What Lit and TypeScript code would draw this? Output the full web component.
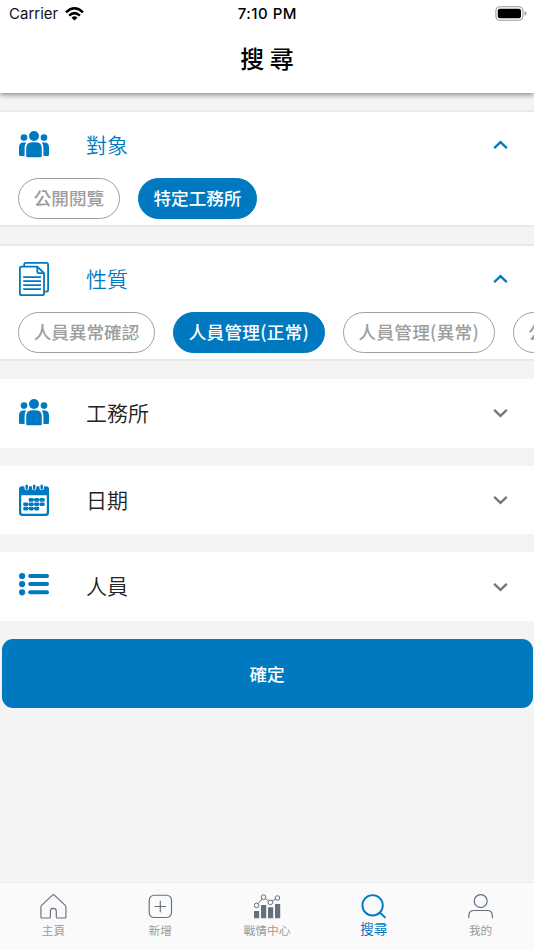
import { LitElement, html, css, svg, nothing } from "lit";
import { customElement, property } from "lit/decorators.js";
import { classMap } from "lit/directives/class-map.js";

const people = svg`<svg width="30" height="34" viewBox="0 0 30 34" fill="currentColor">
  <circle cx="15" cy="8" r="5"/><circle cx="5" cy="9.6" r="3.3"/><circle cx="25" cy="9.6" r="3.3"/>
  <path d="M7.2 28V20.5Q7.2 14.3 13 14.3H17Q22.8 14.3 22.8 20.5V28Q22.8 29.3 21.5 29.3H8.5Q7.2 29.3 7.2 28Z"/>
  <path d="M0 26.8V19.5Q0 14.6 4.5 14.6H7.2Q5.6 16.8 5.6 20V28H1.2Q0 28 0 26.8Z"/>
  <path d="M30 26.8V19.5Q30 14.6 25.5 14.6H22.8Q24.4 16.8 24.4 20V28H28.8Q30 28 30 26.8Z"/></svg>`;

const documents = svg`<svg width="30" height="34" viewBox="0 0 30 34" fill="none" stroke="currentColor" stroke-width="1.8" stroke-linejoin="round">
  <path d="M5.2 4V2.4Q5.2.9 6.7.9H27.5Q29.1.9 29.1 2.5V28Q29.1 29.6 27.5 29.6H25.4"/>
  <path d="M18.3 4.6H2.6Q.9 4.6.9 6.2V31.4Q.9 33.1 2.6 33.1H23.4Q25 33.1 25 31.4V11.2Z"/>
  <path d="M18.3 4.8V9.6Q18.3 11.2 19.9 11.2H25"/>
  <path d="M4.2 15.2H22M4.2 19.1H22M4.2 23.2H22M4.2 27.2H22"/></svg>`;

const calendar = svg`<svg width="30" height="34" viewBox="0 0 30 34" fill="currentColor">
  <path fill-rule="evenodd" d="M3 3.2H27Q30 3.2 30 6.2V29.8Q30 32.9 27 32.9H3Q0 32.9 0 29.8V6.2Q0 3.2 3 3.2ZM2.2 12.2V29.2Q2.2 30.8 3.8 30.8H26.2Q27.8 30.8 27.8 29.2V12.2Z"/>
  <g fill="none" stroke="#fff" stroke-width="4.6" stroke-linecap="round"><path d="M7.7 2.6V5M15.2 2.6V5M22.7 2.6V5"/></g>
  <g fill="none" stroke="currentColor" stroke-width="2.4" stroke-linecap="round"><path d="M7.7 2.8V5.6M15.2 2.8V5.6M22.7 2.8V5.6"/></g>
  ${[[16.8, [1, 2, 3]], [21.2, [0, 1, 2, 3]], [25.5, [0, 1, 2]]].map(([y, cols]) =>
    (cols as number[]).map((c) => svg`<rect x=${4.2 + c * 5.5} y=${(y as number) - 1.8} width="5" height="3.7" rx="1.3"/>`))}
  <path d="M12 16.3H23V17.1H12ZM6 20.7H23V21.5H6ZM6 25.1H18V25.9H6Z"/></svg>`;

const list = svg`<svg width="30" height="34" viewBox="0 0 30 34" fill="currentColor">
  ${[6, 14.1, 22.3].map((y) => svg`<circle cx="3.1" cy=${y} r="3.1"/><rect x="9.2" y=${y - 2} width="20.8" height="4" rx="2"/>`)}</svg>`;

const home = svg`<svg width="28" height="28" viewBox="-.6 0 28 28" fill="none" stroke="currentColor" stroke-width="1.15" stroke-linejoin="round">
  <path d="M2 13.3Q1.3 14 1.3 15V25Q1.3 26 2.3 26H9.8Q10.8 26 10.8 25V19.2Q10.8 16.3 13.7 16.3Q16.7 16.3 16.7 19.2V25Q16.7 26 17.7 26H25.3Q26.3 26 26.3 25V15Q26.3 14 25.6 13.3L14.8 3.1Q13.8 2.3 12.8 3.1Z"/></svg>`;
const plus = svg`<svg width="28" height="28" viewBox="-.3 0 28 28" fill="none" stroke="currentColor" stroke-width="1.15" stroke-linecap="round">
  <rect x="2.9" y="3.2" width="22.3" height="22.3" rx="5"/><path d="M14 9.2V19.8M8.7 14.5H19.3"/></svg>`;
const chart = svg`<svg width="28" height="28" viewBox="0 0 28 28" fill="currentColor">
  <rect x="1" y="19" width="5.2" height="7.2" rx=".5"/><rect x="8" y="13" width="5.2" height="13.2" rx=".5"/><rect x="15" y="15.2" width="5.2" height="11" rx=".5"/><rect x="22" y="12" width="5.2" height="14.2" rx=".5"/>
  <g fill="none" stroke="currentColor" stroke-width="1"><path d="M5.2 11.6L8.9 7M12.5 6.7L15.6 9.1M19.1 9.2L22.5 7.1"/><circle cx="3.6" cy="13.4" r="2.3"/><circle cx="10.6" cy="5.1" r="2.3"/><circle cx="17.4" cy="10.4" r="2.3"/><circle cx="24.4" cy="6" r="2.3"/></g></svg>`;
const search = svg`<svg width="28" height="28" viewBox="0 0 28 28" fill="none" stroke="currentColor" stroke-width="1.9" stroke-linecap="round">
  <circle cx="12.6" cy="13.3" r="10.2"/><path d="M20 20.7L25 25.4"/></svg>`;
const person = svg`<svg width="28" height="28" viewBox="0 0 28 28" fill="none" stroke="currentColor" stroke-width="1.2" stroke-linecap="round">
  <circle cx="13.7" cy="9.1" r="6.5"/><path d="M1.8 25.6V23.8Q1.8 18.5 7 18.5H20.2Q25.4 18.5 25.4 23.8V25.6"/></svg>`;

interface Chip { label: string; on?: boolean; loose?: boolean }

@customElement("filter-panel")
class FilterPanel extends LitElement {
  @property() label = "";
  @property({ attribute: false }) icon: unknown;
  @property({ attribute: false }) chips: Chip[] = [];

  static styles = css`
    :host { display: block; flex: none; background: #fff; }
    .open { box-sizing: border-box; border-top: 2px solid #e9e9e9; border-bottom: 2px solid #e9e9e9; height: 117px; overflow: hidden; }
    .head { display: flex; align-items: center; height: 68.7px; padding: 0 26px 0 19px; color: #0079c1; }
    .open .head { margin-top: -1.5px; }
    .icon { display: flex; width: 67px; }
    .title { flex: 1; padding-bottom: 2.6px; font-size: 21px; line-height: 30px; font-weight: 350; color: #222; }
    .open .title { color: #0079c1; padding-bottom: 1.6px; }
    .chev { color: #757575; }
    .open .chev { color: #0079c1; transform: rotate(180deg); }
    .chips { display: flex; gap: 18px; padding-left: 18px; margin-top: -.9px; overflow: hidden; }
    .chip { box-sizing: border-box; flex: none; height: 40.6px; line-height: 38px; border: 1.4px solid #9e9e9e; border-radius: 21px; padding: 0 14.7px; color: #9e9e9e; font-size: 17.6px; white-space: nowrap; font-weight: 500; }
    .on { background: #0079c1; border-color: #0079c1; color: #fff; }
    .loose { letter-spacing: .3px; }
  `;

  render() {
    return html`<div class=${classMap({ open: this.chips.length > 0 })}>
      <div class="head">
        <span class="icon">${this.icon}</span>
        <span class="title">${this.label}</span>
        <svg class="chev" width="15" height="10" viewBox="0 0 15 10" fill="none" stroke="currentColor" stroke-width="2.3"><path d="M1.2 1.8L7.5 7.8L13.8 1.8"/></svg>
      </div>
      ${this.chips.length
        ? html`<div class="chips">${this.chips.map((c) => html`<span class=${classMap({ chip: true, on: !!c.on, loose: !!c.loose })}>${c.label}</span>`)}</div>`
        : nothing}
    </div>`;
  }
}

@customElement("app-root")
class AppRoot extends LitElement {
  static styles = css`
    :host { display: flex; flex-direction: column; height: 950px; overflow: hidden; background: #f4f4f4; font-family: "Noto Sans CJK TC", sans-serif; }
    .top { flex: none; height: 92.5px; background: #fff; box-shadow: 0 2px 5px rgba(0,0,0,.42); }
    .status { display: grid; grid-template-columns: 1fr auto 1fr; align-items: center; height: 28px; padding: 0 7px 0 9px; font: 400 15px/28px Inter, sans-serif; color: #111; }
    .left { display: flex; align-items: center; gap: 7px; }
    .time { font-weight: 500; letter-spacing: .5px; margin-right: 1.4px; color: #000; }
    .battery { justify-self: end; }
    .heading { margin: 0; text-align: center; font-size: 24px; line-height: 60px; font-weight: 500; color: #000; }
    .body { flex: 1; min-height: 0; display: flex; flex-direction: column; gap: 18px; padding-top: 18.5px; }
    .expanded { margin-top: -1px; }
    .ok { flex: none; height: 69px; margin: 0 1.5px; padding: 0; border: 0; border-radius: 11px; background: #0079c1; color: #fff; font: 500 17.6px "Noto Sans CJK TC", sans-serif; }
    .tabs { flex: none; height: 67px; border-top: 1px solid #eeeeee; background: #fafafa; display: grid; grid-template-columns: repeat(5, 1fr); }
    .tab { display: flex; flex-direction: column; align-items: center; padding-top: 8.6px; color: #65707e; }
    .name { font-size: 11.7px; line-height: 20px; color: #9b9b9b; }
    .active, .active .name { color: #0079c1; }
    .active .name { font-size: 13.6px; line-height: 17px; }
  `;

  render() {
    const tabs = [
      { name: "主頁", icon: home }, { name: "新增", icon: plus }, { name: "戰情中心", icon: chart },
      { name: "搜尋", icon: search, active: true }, { name: "我的", icon: person },
    ];
    return html`
      <header class="top">
        <div class="status">
          <div class="left"><span>Carrier</span>
            <svg width="19" height="17" viewBox="0 0 19 17" fill="none" stroke="#000" stroke-width="2.5"><path d="M1 6.3Q9.5-1.7 18 6.3M4.1 9.6Q9.5 4.6 14.9 9.6"/><path d="M9.5 14.6L6.5 11.7Q9.5 9 12.5 11.7Z" fill="#000" stroke="none"/></svg>
          </div>
          <span class="time">7:10 PM</span>
          <svg class="battery" width="32" height="16" viewBox="0 0 32 16"><rect x=".9" y=".8" width="27" height="13.4" rx="4" fill="none" stroke="#999" stroke-width="1.1"/><rect x="2.8" y="2.7" width="23.2" height="9.6" rx="2" fill="#000"/><path d="M29.5 5.3Q31.6 5.9 31.6 7.5T29.5 9.7Z" fill="#999"/></svg>
        </div>
        <h1 class="heading">搜 尋</h1>
      </header>
      <main class="body">
        <filter-panel class="expanded" label="對象" .icon=${people} .chips=${[{ label: "公開閱覽" }, { label: "特定工務所", on: true }]}></filter-panel>
        <filter-panel class="expanded" label="性質" .icon=${documents} .chips=${[{ label: "人員異常確認" }, { label: "人員管理(正常)", on: true, loose: true }, { label: "人員管理(異常)", loose: true }, { label: "公告" }]}></filter-panel>
        <filter-panel label="工務所" .icon=${people}></filter-panel>
        <filter-panel label="日期" .icon=${calendar}></filter-panel>
        <filter-panel label="人員" .icon=${list}></filter-panel>
        <button class="ok">確定</button>
      </main>
      <nav class="tabs">${tabs.map((t) => html`<div class=${classMap({ tab: true, active: !!t.active })}>${t.icon}<span class="name">${t.name}</span></div>`)}</nav>`;
  }
}
